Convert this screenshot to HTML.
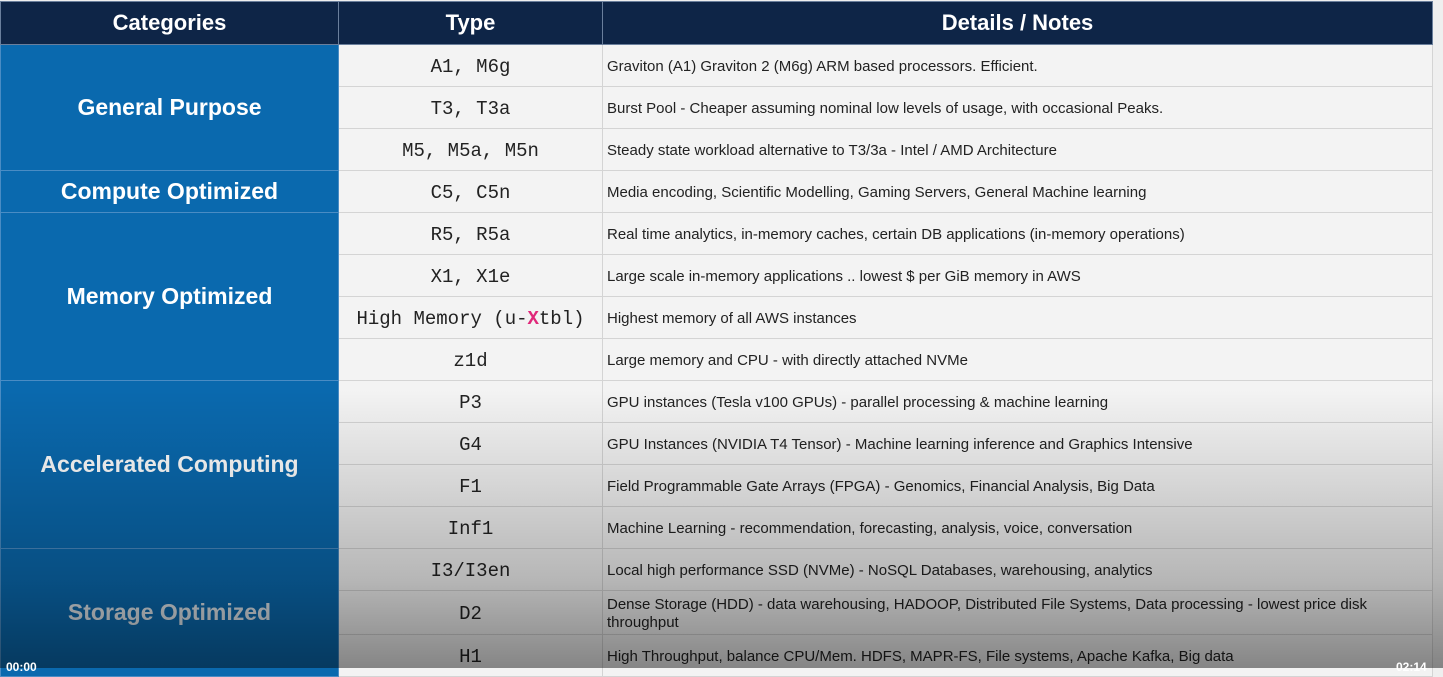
<!DOCTYPE html>
<html><head><style>
html,body{margin:0;padding:0;width:1443px;height:668px;overflow:hidden;background:#efefef;}
.wrap{position:absolute;left:0;top:0;width:1432px;height:668px;}
table{border-collapse:collapse;position:absolute;left:0;top:1px;width:1432px;table-layout:fixed;}
th{background:#0e2547;color:#fff;font:bold 22px "Liberation Sans",sans-serif;height:42px;border:1px solid #6a7f9c;padding:0;}
td{height:41px;border:1px solid #d4d4d4;padding:0;}
td.cat{background:#0a69ae;color:#fff;font:bold 23px "Liberation Sans",sans-serif;text-align:center;border:1px solid #4a8cc4;}
td.ty{background:#f3f3f3;font:19px "Liberation Mono",monospace;text-align:center;color:#222;padding-top:3px;height:38px;}
td.de{background:#f3f3f3;font:15px "Liberation Sans",sans-serif;color:#222;padding-left:4px;line-height:18px;padding-top:2px;height:39px;}
.ov{position:absolute;left:0;top:0;width:1443px;height:668px;pointer-events:none;
background:linear-gradient(to bottom,rgba(0,0,0,0) 0,rgba(0,0,0,0) 390px,rgba(0,0,0,0.1) 470px,rgba(0,0,0,0.25) 580px,rgba(0,0,0,0.45) 668px);}
.t{position:absolute;color:#fff;font:bold 12px "Liberation Sans",sans-serif;top:660px;}
</style></head><body>
<div class="wrap">
<table>
<colgroup><col style="width:338px"><col style="width:264px"><col style="width:830px"></colgroup>
<tr><th>Categories</th><th>Type</th><th>Details / Notes</th></tr>
<tr><td class="cat" rowspan="3">General Purpose</td><td class="ty">A1, M6g</td><td class="de">Graviton (A1) Graviton 2 (M6g) ARM based processors. Efficient.</td></tr>
<tr><td class="ty">T3, T3a</td><td class="de">Burst Pool - Cheaper assuming nominal low levels of usage, with occasional Peaks.</td></tr>
<tr><td class="ty">M5, M5a, M5n</td><td class="de">Steady state workload alternative to T3/3a - Intel / AMD Architecture</td></tr>
<tr><td class="cat">Compute Optimized</td><td class="ty">C5, C5n</td><td class="de">Media encoding, Scientific Modelling, Gaming Servers, General Machine learning</td></tr>
<tr><td class="cat" rowspan="4">Memory Optimized</td><td class="ty">R5, R5a</td><td class="de">Real time analytics, in-memory caches, certain DB applications (in-memory operations)</td></tr>
<tr><td class="ty">X1, X1e</td><td class="de">Large scale in-memory applications .. lowest $ per GiB memory in AWS</td></tr>
<tr><td class="ty">High Memory (u-<b style="color:#e0287a">X</b>tbl)</td><td class="de">Highest memory of all AWS instances</td></tr>
<tr><td class="ty">z1d</td><td class="de">Large memory and CPU - with directly attached NVMe</td></tr>
<tr><td class="cat" rowspan="4">Accelerated Computing</td><td class="ty">P3</td><td class="de">GPU instances (Tesla v100 GPUs) - parallel processing &amp; machine learning</td></tr>
<tr><td class="ty">G4</td><td class="de">GPU Instances (NVIDIA T4 Tensor) - Machine learning inference and Graphics Intensive</td></tr>
<tr><td class="ty">F1</td><td class="de">Field Programmable Gate Arrays (FPGA) - Genomics, Financial Analysis, Big Data</td></tr>
<tr><td class="ty">Inf1</td><td class="de">Machine Learning - recommendation, forecasting, analysis, voice, conversation</td></tr>
<tr><td class="cat" rowspan="3" style="color:#dfe6ec">Storage Optimized</td><td class="ty">I3/I3en</td><td class="de">Local high performance SSD (NVMe) - NoSQL Databases, warehousing, analytics</td></tr>
<tr><td class="ty" style="height:40px">D2</td><td class="de" style="height:41px">Dense Storage (HDD) - data warehousing, HADOOP, Distributed File Systems, Data processing - lowest price disk throughput</td></tr>
<tr><td class="ty">H1</td><td class="de">High Throughput, balance CPU/Mem. HDFS, MAPR-FS, File systems, Apache Kafka, Big data</td></tr>
</table>
</div>
<div class="ov"></div>
<div class="t" style="left:6px">00:00</div>
<div class="t" style="left:1396px">02:14</div>
</body></html>
